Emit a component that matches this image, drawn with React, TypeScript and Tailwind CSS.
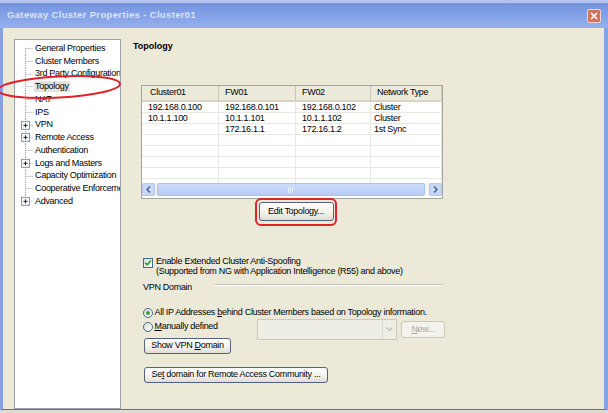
import clsx from 'clsx';
import type { ReactNode } from 'react';

const TREE = [
    { label: 'General Properties' },
    { label: 'Cluster Members' },
    { label: '3rd Party Configuration' },
    { label: 'Topology', selected: true },
    { label: 'NAT' },
    { label: 'IPS' },
    { label: 'VPN', plus: true },
    { label: 'Remote Access', plus: true },
    { label: 'Authentication' },
    { label: 'Logs and Masters', plus: true },
    { label: 'Capacity Optimization' },
    { label: 'Cooperative Enforcement' },
    { label: 'Advanced', plus: true },
];

const ROWS = [
    ['192.168.0.100', '192.168.0.101', '192.168.0.102', 'Cluster'],
    ['10.1.1.100', '10.1.1.101', '10.1.1.102', 'Cluster'],
    ['', '172.16.1.1', '172.16.1.2', '1st Sync'],
    ['', '', '', ''],
    ['', '', '', ''],
    ['', '', '', ''],
    ['', '', '', ''],
    ['', '', '', ''],
];

const COLS = ['w-[77px]', 'w-[77px]', 'w-[75px]', 'flex-1'];

function TreeRow({ label, plus, selected, first, last }: { label: string; plus?: boolean; selected?: boolean; first: boolean; last: boolean }) {
    const mid = 6.375;
    return (
        <div className="flex h-[12.75px] items-center whitespace-nowrap">
            <svg width="19" height="12.75" viewBox="0 0 19 12.75" className="shrink-0">
                <line x1="10.5" x2="10.5" y1={first ? mid : 0} y2={last ? mid : 12.75} stroke="#9c9c9c" strokeDasharray="1 1" />
                <line x1={plus ? 14.5 : 10.5} x2="18.5" y1={mid} y2={mid} stroke="#9c9c9c" strokeDasharray="1 1" />
                {plus && (
                    <g>
                        <rect x="6.5" y={mid - 4} width="8" height="8" fill="#f6f6f6" stroke="#8c96a2" />
                        <line x1="8.5" x2="12.5" y1={mid} y2={mid} stroke="#222" />
                        <line x1="10.5" x2="10.5" y1={mid - 2} y2={mid + 2} stroke="#222" />
                    </g>
                )}
            </svg>
            <span className={clsx('px-[1px] leading-[11px]', selected && 'bg-[#e4e4de]')}>{label}</span>
        </div>
    );
}

function XpButton({ children, className, disabled }: { children: ReactNode; className?: string; disabled?: boolean }) {
    return (
        <button
            type="button"
            className={clsx(
                'flex items-center justify-center rounded-[3px] border leading-none',
                disabled
                    ? 'border-[#cac8bb] bg-[#f3f2ec] text-[#aca899]'
                    : 'border-[#52627a] bg-gradient-to-b from-white via-[#f5f4ef] to-[#e0ded3] text-black',
                className
            )}
        >
            {children}
        </button>
    );
}

function Radio({ checked }: { checked?: boolean }) {
    return (
        <div className="flex h-[10px] w-[10px] shrink-0 items-center justify-center rounded-full border border-[#46688c] bg-gradient-to-br from-[#dcdcd5] to-white">
            {checked && <div className="h-[4px] w-[4px] rounded-full bg-[#3c9e3c]" />}
        </div>
    );
}

function Chevron({ dir }: { dir: 'left' | 'right' }) {
    return (
        <svg width="5" height="7" viewBox="0 0 5 7">
            <path d={dir === 'left' ? 'M4 0.5 L1 3.5 L4 6.5' : 'M1 0.5 L4 3.5 L1 6.5'} fill="none" stroke="#4d6185" strokeWidth="1.5" />
        </svg>
    );
}

export default function App() {
    return (
        <div className="relative flex h-[413px] w-[608px] flex-col overflow-hidden bg-[#ece9d8] font-['Liberation_Sans',Arial,sans-serif] text-[9px] tracking-[-0.3px] text-black">
            <div className="h-[3px] bg-[#b3c3ea]" />
            {/* Title bar */}
            <div className="flex h-[25px] items-center justify-between bg-gradient-to-b from-[#7694df] via-[#83a1e7] to-[#96b0ee] pl-[7px]">
                <span className="text-[9.5px] font-bold tracking-[0.35px] text-[#dbe4f8]">Gateway Cluster Properties - Cluster01</span>
                <div className="mr-[7px] flex h-[14px] w-[14px] items-center justify-center rounded-[2px] border border-[#f2d6ce] bg-[#d0735f]">
                    <svg width="8" height="8" viewBox="0 0 8 8">
                        <path d="M1 1 L7 7 M7 1 L1 7" stroke="#fff" strokeWidth="1.7" />
                    </svg>
                </div>
            </div>

            {/* Body */}
            <div className="flex h-[382px] border-b border-l-[3px] border-r-[4px] border-b-[#6e6e6e] border-l-[#86a2e4] border-r-[#86a2e4]">
                {/* Tree */}
                <div className="ml-[11px] mt-[11px] w-[107px] shrink-0 overflow-hidden border border-[#9aa3ad] bg-white pt-[2px]">
                    {TREE.map((item, i) => (
                        <TreeRow key={item.label} {...item} first={i === 0} last={i === TREE.length - 1} />
                    ))}
                </div>

                {/* Content */}
                <div className="ml-[12px] flex flex-col">
                    <h2 className="mt-[13px] text-[9px] font-bold leading-[11px] tracking-normal">Topology</h2>

                    {/* Topology table */}
                    <div className="ml-[8px] mt-[33px] flex h-[114px] w-[302px] flex-col border border-[#a3a3a0] bg-white">
                        <div className="flex h-[16px] border-b-2 border-[#d8d4c4] bg-[#ebeadb]">
                            {['Cluster01', 'FW01', 'FW02', 'Network Type'].map((h, i) => (
                                <div key={h} className={clsx('flex items-center border-r border-[#c9c6b4]', COLS[i], i === 0 ? 'pl-[8px]' : 'pl-[6px]')}>
                                    {h}
                                </div>
                            ))}
                        </div>
                        <div className="h-[81px] overflow-hidden">
                            {ROWS.map((row, r) => (
                                <div key={r} className="flex h-[11px] border-b border-[#e8e8e3]">
                                    {row.map((cell, c) => (
                                        <div key={c} className={clsx('flex items-center border-r border-[#e8e8e3] leading-[10px]', COLS[c], c === 3 ? 'pl-[3px]' : 'pl-[6px]')}>
                                            {cell}
                                        </div>
                                    ))}
                                </div>
                            ))}
                        </div>
                        {/* Horizontal scrollbar */}
                        <div className="flex h-[13px] bg-[#f4f3ee]">
                            <div className="flex w-[13px] items-center justify-center rounded-[2px] border border-[#b5c7ef] bg-[#c7d7f9]">
                                <Chevron dir="left" />
                            </div>
                            <div className="ml-[2px] flex w-[268px] items-center justify-center rounded-[2px] border border-[#adc1ef] bg-gradient-to-b from-[#cddcfb] to-[#b7caf4]">
                                <svg width="6" height="6" viewBox="0 0 6 6">
                                    <path d="M0.5 0 V6 M2.5 0 V6 M4.5 0 V6" stroke="#e8eefc" strokeWidth="1" />
                                </svg>
                            </div>
                            <div className="flex-1" />
                            <div className="flex w-[13px] items-center justify-center rounded-[2px] border border-[#b5c7ef] bg-[#c7d7f9]">
                                <Chevron dir="right" />
                            </div>
                        </div>
                    </div>

                    {/* Edit Topology, circled in red */}
                    <div className="ml-[122px] mt-[-1px] w-fit rounded-[6px] border-2 border-[#e0222a] p-[1.5px] pb-[3px]">
                        <XpButton className="h-[19px] w-[75px]">Edit Topology...</XpButton>
                    </div>

                    {/* Anti-spoofing */}
                    <div className="ml-[10px] mt-[30px] flex gap-[3px]">
                        <div className="mt-[2px] flex h-[10px] w-[10px] items-center justify-center border border-[#46688c] bg-gradient-to-br from-[#dcdcd5] to-white">
                            <svg width="8" height="8" viewBox="0 0 8 8">
                                <path d="M1.2 3.8 L3.2 5.8 L6.8 1.6" fill="none" stroke="#21a121" strokeWidth="1.6" />
                            </svg>
                        </div>
                        <div className="leading-[10px]">
                            <div>Enable Extended Cluster Anti-Spoofing</div>
                            <div>(Supported from NG with Application Intelligence (R55) and above)</div>
                        </div>
                    </div>

                    {/* VPN Domain */}
                    <div className="ml-[10px] mt-[6px] flex items-start leading-[10px]">
                        <span className="w-[72px]">VPN Domain</span>
                        <div className="mt-[2px] h-[2px] w-[228px] border-t border-b border-t-[#c2c0b3] border-b-white" />
                    </div>

                    <div className="ml-[10px] mt-[15px] flex h-[12px] items-center gap-[1.5px]">
                        <Radio checked />
                        <span>
                            All IP Addresses <span className="underline">b</span>ehind Cluster Members based on Topology information.
                        </span>
                    </div>

                    <div className="ml-[10px] flex items-start">
                        <div className="flex w-[114px] flex-col">
                            <div className="mt-[1px] flex h-[14px] items-center gap-[1.5px]">
                                <Radio />
                                <span>
                                    <span className="underline">M</span>anually defined
                                </span>
                            </div>
                            <XpButton className="ml-[1px] mt-[4px] h-[16px] w-[87px]">
                                <span>
                                    Show VPN <span className="underline">D</span>omain
                                </span>
                            </XpButton>
                        </div>
                        <div className="flex h-[21px] w-[140px] border border-[#cac8bb] bg-[#efeee4]">
                            <div className="flex-1" />
                            <div className="flex w-[14px] items-center justify-center border-l border-[#dedcd0]">
                                <svg width="7" height="5" viewBox="0 0 7 5">
                                    <path d="M0.5 0.5 L3.5 3.5 L6.5 0.5" fill="none" stroke="#c3c1b2" strokeWidth="1.3" />
                                </svg>
                            </div>
                        </div>
                        <XpButton disabled className="ml-[4px] mt-[2px] h-[17px] w-[44px]">
                            <span>
                                <span className="underline">N</span>ew...
                            </span>
                        </XpButton>
                    </div>

                    <XpButton className="ml-[11px] mt-[13px] h-[16px] w-[184px]">
                        <span>
                            Se<span className="underline">t</span> domain for Remote Access Community ...
                        </span>
                    </XpButton>
                </div>
            </div>
            <div className="flex-1 bg-[#dedcd2]" />

            {/* Red annotation round the Topology node */}
            <svg className="pointer-events-none absolute left-0 top-[70px]" width="130" height="34" viewBox="0 70 130 34">
                <ellipse cx="59" cy="87" rx="61" ry="10.5" transform="rotate(-3 59 87)" fill="none" stroke="#e0222a" strokeWidth="2" />
            </svg>
        </div>
    );
}
